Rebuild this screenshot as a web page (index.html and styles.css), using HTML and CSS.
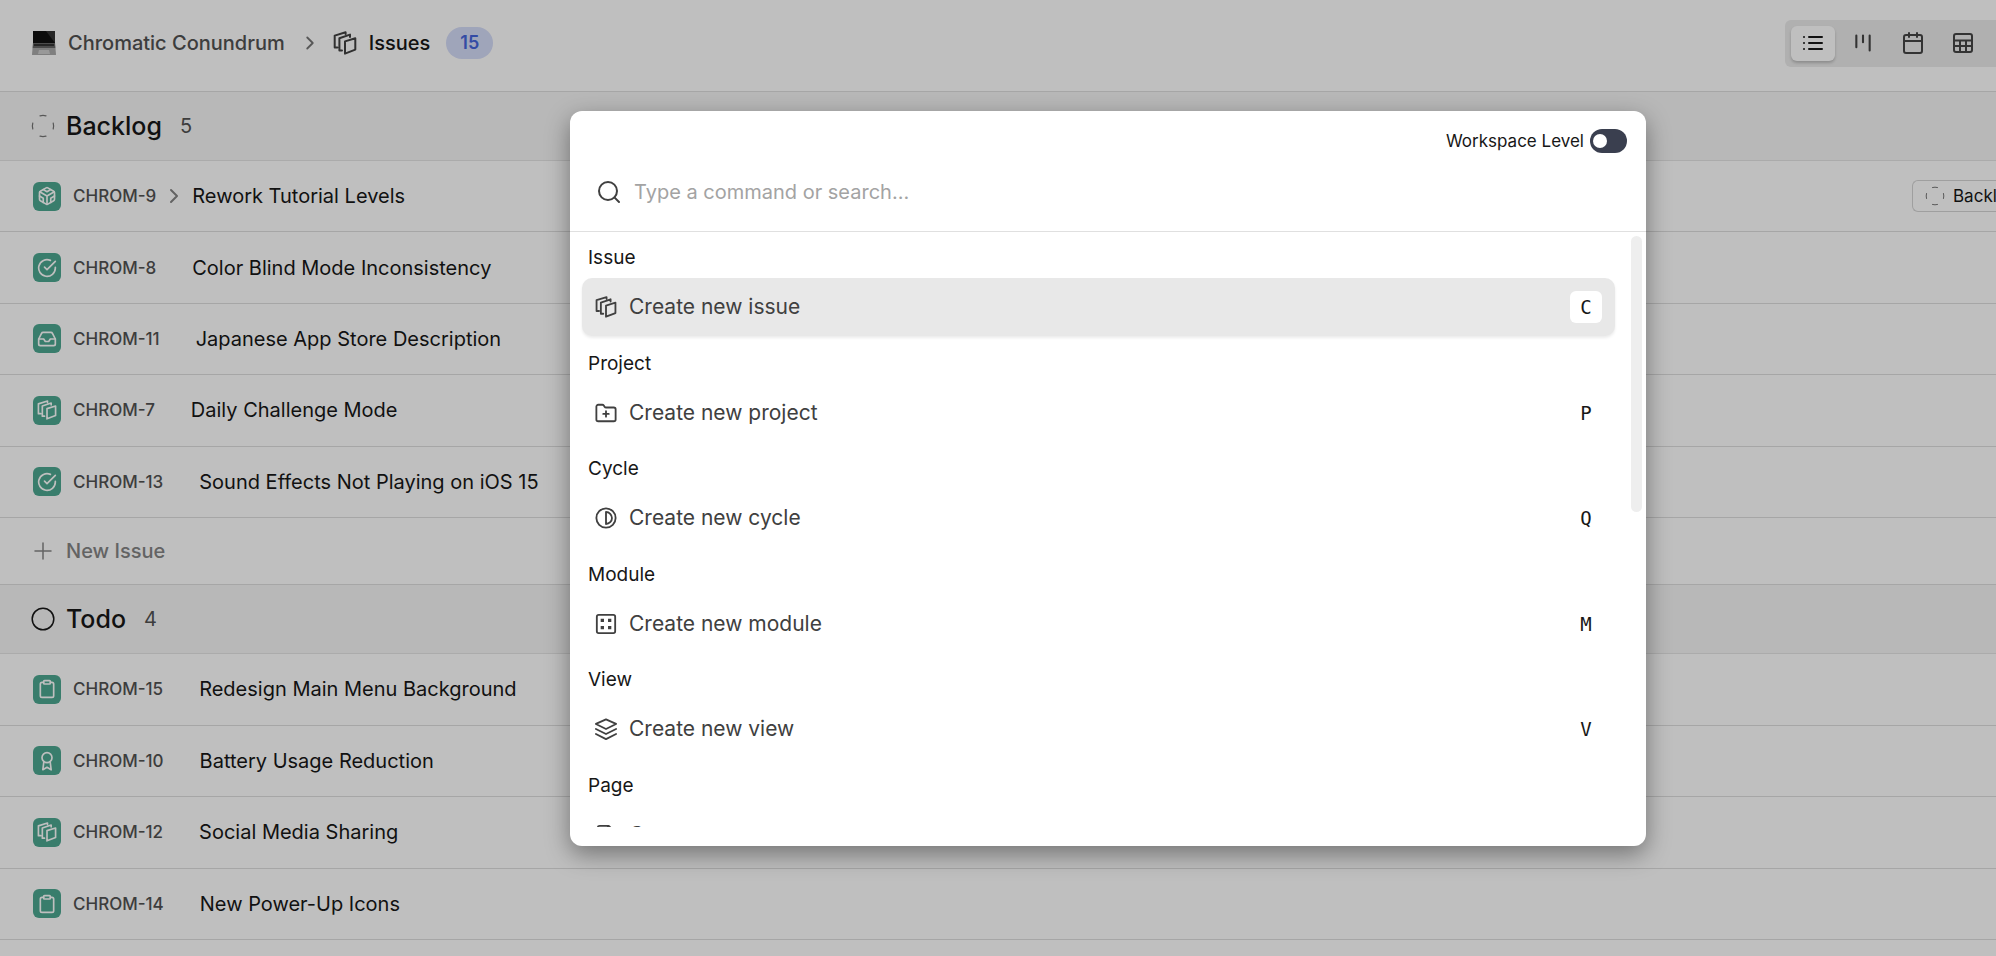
FILE: index.html
```html
<!DOCTYPE html>
<html lang="en">
<head>
<meta charset="utf-8">
<meta name="viewport" content="width=device-width, initial-scale=1">
<title>Chromatic Conundrum – Issues</title>
<link rel="stylesheet" href="styles.css">
</head>
<body>
<svg class="sprite" aria-hidden="true">
  <symbol id="i-issues" viewBox="0 0 24 24"><path d="M12 10.4 22.3 7.2V18.6L12 22.6ZM9 19.4H6.4V7.2L17 3.6V6M4.4 16.4H1.7V4.6L12.6 1.2V3"/></symbol>
  <symbol id="i-chevron" viewBox="0 0 24 24"><path d="m9 18 6-6-6-6"/></symbol>
  <symbol id="i-backlog" viewBox="0 0 24 24"><path d="M9 1.8a11 11 0 0 1 6 0M9 22.2a11 11 0 0 0 6 0M1.8 9a11 11 0 0 0 0 6M22.2 9a11 11 0 0 1 0 6"/></symbol>
  <symbol id="i-todo" viewBox="0 0 24 24"><circle cx="12" cy="12" r="10.800" stroke-width="1.500"/></symbol>
  <symbol id="i-box" viewBox="0 0 24 24"><path d="M21 16V8a2 2 0 0 0-1-1.73l-7-4a2 2 0 0 0-2 0l-7 4A2 2 0 0 0 3 8v8a2 2 0 0 0 1 1.73l7 4a2 2 0 0 0 2 0l7-4A2 2 0 0 0 21 16z"/><path d="M7.5 4.21 12 6.81l4.5-2.6M7.5 19.79V14.6L3 12M21 12l-4.5 2.6v5.19M3.27 6.96 12 12.01l8.73-5.05M12 22.08V12"/></symbol>
  <symbol id="i-check" viewBox="0 0 24 24"><path d="M22 11.08V12a10 10 0 1 1-5.93-9.14"/><path d="m9 11 3 3L22 4"/></symbol>
  <symbol id="i-inbox" viewBox="0 0 24 24"><path d="M22 12h-6l-2 3h-4l-2-3H2"/><path d="M5.45 5.11 2 12v6a2 2 0 0 0 2 2h16a2 2 0 0 0 2-2v-6l-3.45-6.89A2 2 0 0 0 16.76 4H7.24a2 2 0 0 0-1.79 1.11z"/></symbol>
  <symbol id="i-clipboard" viewBox="0 0 24 24"><rect x="8" y="2" width="8" height="4" rx="1"/><path d="M16 4h2a2 2 0 0 1 2 2v14a2 2 0 0 1-2 2H6a2 2 0 0 1-2-2V6a2 2 0 0 1 2-2h2"/></symbol>
  <symbol id="i-award" viewBox="0 0 24 24"><circle cx="12" cy="8" r="6"/><path d="M8.2 13 7 22.5l5-3 5 3-1.2-9.5"/></symbol>
  <symbol id="i-plus" viewBox="0 0 24 24"><path d="M4 12h16M12 4v16" stroke-width="1.500"/></symbol>
  <symbol id="i-list" viewBox="0 0 24 24"><path d="M8 6h13M8 12h13M8 18h13M3 6h.01M3 12h.01M3 18h.01"/></symbol>
  <symbol id="i-kanban" viewBox="0 0 24 24"><path d="M4 3v14M12 3v8M20 3v18" stroke-width="2.500"/></symbol>
  <symbol id="i-calendar" viewBox="0 0 24 24"><rect x="3" y="4" width="18" height="18" rx="2"/><path d="M16 2v4M8 2v4M3 10h18"/></symbol>
  <symbol id="i-sheet" viewBox="0 0 24 24"><rect x="3" y="3" width="18" height="18" rx="2"/><path d="M3 9.500h18M3 15h18M9 9.500V21M15 9.500V21"/></symbol>
  <symbol id="i-search" viewBox="0 0 24 24"><circle cx="11" cy="11" r="9"/><path d="m22 22-4.600-4.600"/></symbol>
  <symbol id="i-folder" viewBox="0 0 24 24"><path d="M12 10v6M9 13h6M20.500 21a2 2 0 0 0 2-2V8a2 2 0 0 0-2-2h-8.400a2 2 0 0 1-1.690-.9L9.600 3.900A2 2 0 0 0 7.930 3H3.500a2 2 0 0 0-2 2v14a2 2 0 0 0 2 2Z"/></symbol>
  <symbol id="i-cycle" viewBox="0 0 24 24"><circle cx="12" cy="12" r="10.500"/><path d="M12 18.500a6.500 6.500 0 0 0 0-13v13z"/></symbol>
  <symbol id="i-module" viewBox="0 0 24 24"><rect x="2" y="2" width="20" height="20" rx="2"/><path d="M8 6.200v3.600M16 6.200v3.600M8 14.200v3.600M16 14.200v3.600" stroke-width="3.600" stroke-linecap="butt"/></symbol>
  <symbol id="i-view" viewBox="0 0 24 24"><path d="m12 1.500 11 5-11 5.500L1 6.500zM1 17.500 12 23l11-5.500M1 12l11 5.500L23 12"/></symbol>
  <symbol id="i-page" viewBox="0 0 24 24"><path d="M15 2H5a2 2 0 0 0-2 2v16a2 2 0 0 0 2 2h13a2 2 0 0 0 2-2V7zM14 2v6h6"/></symbol>
</svg>

<main class="page">
  <header class="topbar">
    <nav class="crumbs" aria-label="Breadcrumb">
      <a class="crumb project" href="#">
        <svg class="laptop" viewBox="0 0 24 24" aria-hidden="true"><path fill="#111" d="M1 0h22v12H1z"/><path fill="#333" d="m14 0 9 12V0z"/><path fill="#666" d="M1 12h22l.5 5H.5z"/><path fill="#333" d="M2 13h20v2H2z"/><path fill="#aaa" d="M.5 17h23l.5 7H0z"/><path fill="#ccc" d="M7 19h10l1 4H6z"/></svg>
        Chromatic Conundrum
      </a>
      <svg class="icon crumb-sep" aria-hidden="true"><use href="#i-chevron"/></svg>
      <a class="crumb current" href="#"><svg class="icon icon-l" aria-hidden="true"><use href="#i-issues"/></svg>Issues</a>
      <span class="count">15</span>
    </nav>
    <div class="layouts" role="group" aria-label="Layout">
      <button class="layout active" aria-label="List"><svg class="icon icon-l"><use href="#i-list"/></svg></button>
      <button class="layout" aria-label="Board"><svg class="icon"><use href="#i-kanban"/></svg></button>
      <button class="layout" aria-label="Calendar"><svg class="icon icon-l"><use href="#i-calendar"/></svg></button>
      <button class="layout" aria-label="Spreadsheet"><svg class="icon icon-l"><use href="#i-sheet"/></svg></button>
    </div>
  </header>

  <section>
    <h2 class="state"><svg class="icon icon-l dim"><use href="#i-backlog"/></svg>Backlog <span class="total">5</span></h2>
    <ul class="rows five">
      <li class="row"><span class="badge"><svg class="icon"><use href="#i-box"/></svg></span><span class="key">CHROM-9</span><button class="expand" aria-label="Expand"><svg class="icon icon-l"><use href="#i-chevron"/></svg></button><a class="title" href="#">Rework Tutorial Levels</a><button class="chip"><svg class="icon dim"><use href="#i-backlog"/></svg>Backlog</button></li>
      <li class="row"><span class="badge"><svg class="icon"><use href="#i-check"/></svg></span><span class="key">CHROM-8</span><span class="expand"></span><a class="title" href="#">Color Blind Mode Inconsistency</a></li>
      <li class="row"><span class="badge"><svg class="icon"><use href="#i-inbox"/></svg></span><span class="key">CHROM-11</span><span class="expand"></span><a class="title" href="#">Japanese App Store Description</a></li>
      <li class="row"><span class="badge"><svg class="icon"><use href="#i-issues"/></svg></span><span class="key">CHROM-7</span><span class="expand"></span><a class="title" href="#">Daily Challenge Mode</a></li>
      <li class="row"><span class="badge"><svg class="icon"><use href="#i-check"/></svg></span><span class="key">CHROM-13</span><span class="expand"></span><a class="title" href="#">Sound Effects Not Playing on iOS 15</a></li>
    </ul>
    <button class="new-issue"><svg class="icon icon-l"><use href="#i-plus"/></svg>New Issue</button>
  </section>

  <section>
    <h2 class="state"><svg class="icon icon-l"><use href="#i-todo"/></svg>Todo <span class="total">4</span></h2>
    <ul class="rows four">
      <li class="row"><span class="badge"><svg class="icon"><use href="#i-clipboard"/></svg></span><span class="key">CHROM-15</span><span class="expand"></span><a class="title" href="#">Redesign Main Menu Background</a></li>
      <li class="row"><span class="badge"><svg class="icon"><use href="#i-award"/></svg></span><span class="key">CHROM-10</span><span class="expand"></span><a class="title" href="#">Battery Usage Reduction</a></li>
      <li class="row"><span class="badge"><svg class="icon"><use href="#i-issues"/></svg></span><span class="key">CHROM-12</span><span class="expand"></span><a class="title" href="#">Social Media Sharing</a></li>
      <li class="row"><span class="badge"><svg class="icon"><use href="#i-clipboard"/></svg></span><span class="key">CHROM-14</span><span class="expand"></span><a class="title" href="#">New Power-Up Icons</a></li>
    </ul>
  </section>
</main>

<div class="overlay">
  <div class="palette" role="dialog" aria-modal="true" aria-label="Command palette">
    <div class="level">
      <label for="level">Workspace Level</label>
      <input class="switch" id="level" type="checkbox" role="switch">
    </div>
    <div class="search">
      <svg class="icon icon-l" aria-hidden="true"><use href="#i-search"/></svg>
      <input class="query" type="text" placeholder="Type a command or search..." aria-label="Type a command or search">
    </div>
    <div class="results">
      <div class="groups">
        <section class="group"><h3 class="heading">Issue</h3><button class="command selected"><svg class="icon icon-m"><use href="#i-issues"/></svg>Create new issue<kbd class="shortcut">C</kbd></button></section>
        <section class="group"><h3 class="heading">Project</h3><button class="command"><svg class="icon icon-m"><use href="#i-folder"/></svg>Create new project<kbd class="shortcut">P</kbd></button></section>
        <section class="group"><h3 class="heading">Cycle</h3><button class="command"><svg class="icon icon-m"><use href="#i-cycle"/></svg>Create new cycle<kbd class="shortcut">Q</kbd></button></section>
        <section class="group"><h3 class="heading">Module</h3><button class="command"><svg class="icon icon-m"><use href="#i-module"/></svg>Create new module<kbd class="shortcut">M</kbd></button></section>
        <section class="group"><h3 class="heading">View</h3><button class="command"><svg class="icon icon-m"><use href="#i-view"/></svg>Create new view<kbd class="shortcut">V</kbd></button></section>
        <section class="group"><h3 class="heading">Page</h3><button class="command"><svg class="icon icon-m"><use href="#i-page"/></svg>Create new page</button></section>
      </div>
      <span class="thumb"></span>
    </div>
  </div>
</div>
</body>
</html>
```
FILE: styles.css
```css
* { box-sizing: border-box; }

body {
  margin: 0;
  height: 100vh;
  overflow: hidden;
  position: relative;
  background: #fff;
  color: #171717;
  font: 400 20px/28px Inter, "Liberation Sans", sans-serif;
}

h2, h3, ul { margin: 0; padding: 0; font: inherit; list-style: none; }
a { color: inherit; text-decoration: none; }
button, input { font: inherit; color: inherit; border: 0; margin: 0; padding: 0; background: none; }

.sprite { position: absolute; width: 0; height: 0; }

.icon {
  flex: none;
  width: 20px;
  height: 20px;
  fill: none;
  stroke: currentColor;
  stroke-width: 2;
  stroke-linecap: round;
  stroke-linejoin: round;
}
.icon-m { width: 22px; height: 22px; }
.icon-l { width: 24px; height: 24px; }
.dim { color: #757575; stroke-width: 1.2; }

/* Top bar */
.topbar {
  display: flex;
  justify-content: space-between;
  align-items: center;
  height: 92px;
  padding: 0 0 5px 32px;
  border-bottom: 1px solid #dedede;
}
.crumbs, .crumb { display: flex; align-items: center; }
.crumb { gap: 12px; font-weight: 500; }
.project { color: #525252; }
.current .icon { color: #404040; }
.laptop { width: 24px; height: 24px; }
.crumb-sep { margin: 0 12px 0 14px; width: 22px; height: 22px; color: #757575; }
.count {
  margin-left: 16px;
  padding: 0 14px;
  border-radius: 16px;
  background: #d5dcf8;
  color: #4565dc;
  font-size: 18px;
  font-weight: 600;
  line-height: 32px;
}
.layouts {
  display: flex;
  gap: 6px;
  padding: 6px 11px 6px 6px;
  border-radius: 6px 0 0 6px;
  background: #ebebeb;
}
.layout {
  display: flex;
  align-items: center;
  justify-content: center;
  width: 44px;
  height: 35px;
  border-radius: 6px;
  color: #444;
}
.active { background: #fff; color: #171717; box-shadow: 0 2px 3px rgba(0, 0, 0, .2); }

/* Issue list */
.state {
  display: flex;
  align-items: center;
  gap: 11px;
  height: 69px;
  padding: 0 31px;
  border-bottom: 1px solid #e4e4e4;
  background: #f6f6f6;
  font-size: 25px;
  font-weight: 500;
}
.total { margin-left: 7px; color: #525252; font-size: 20px; font-weight: 400; }
.rows { display: grid; grid-auto-rows: 1fr; }
.five { min-height: 357px; }
.four { min-height: 286px; }
.row { display: flex; align-items: center; padding-left: 33px; border-bottom: 1px solid #dedede; }
.badge {
  display: flex;
  align-items: center;
  justify-content: center;
  width: 28px;
  height: 29px;
  margin-right: 12px;
  border-radius: 6px;
  background: #4da790;
  color: #fff;
}
.key { color: #525252; font-size: 17px; font-weight: 500; }
.expand { display: flex; align-items: center; justify-content: center; width: 36px; color: #858585; }
.chip {
  display: flex;
  align-items: center;
  gap: 8px;
  width: 84px;
  height: 32px;
  margin-left: auto;
  padding-left: 12px;
  overflow: hidden;
  border: 1px solid #d4d4d4;
  border-right: 0;
  border-radius: 6px 0 0 6px;
  font-size: 17px;
}
.new-issue {
  display: flex;
  align-items: center;
  gap: 11px;
  width: 100%;
  height: 67px;
  padding: 0 31px;
  border-bottom: 1px solid #dedede;
  color: #858585;
  font-weight: 500;
}

/* Command palette */
.overlay {
  position: absolute;
  inset: 0;
  display: flex;
  padding: 111px 350px 110px 570px;
  background: rgba(0, 0, 0, .25);
}
.palette {
  flex: 1;
  min-width: 0;
  display: flex;
  flex-direction: column;
  padding-bottom: 19px;
  border-radius: 12px;
  background: #fff;
  box-shadow: 0 8px 24px rgba(0, 0, 0, .4);
}
.level {
  display: flex;
  align-items: center;
  justify-content: flex-end;
  gap: 6px;
  padding: 16px 19px 0;
  font-size: 17px;
}
.switch {
  appearance: none;
  display: flex;
  align-items: center;
  width: 37px;
  height: 24px;
  padding: 0 3px;
  border-radius: 12px;
  background: #3a3f4f;
}
.switch::before { content: ""; width: 14px; height: 14px; border-radius: 7px; background: #fff; }
.switch:checked { justify-content: flex-end; }
.search {
  display: flex;
  align-items: center;
  gap: 13px;
  height: 77px;
  padding: 0 27px 2px;
  border-bottom: 1px solid #e0e0e0;
  color: #404040;
}
.query { flex: 1; min-width: 0; outline: 0; }
.query::placeholder { color: #a3a3a3; opacity: 1; }
.results { position: relative; flex: 1; min-height: 0; overflow: hidden; padding: 0 31px 0 12px; }
.groups { display: grid; grid-auto-rows: 1fr; min-height: 633px; }
.heading { padding: 12px 6px 6px; font-size: 19px; }
.command {
  display: flex;
  align-items: center;
  gap: 12px;
  width: 100%;
  height: 58px;
  padding: 0 13px;
  border-radius: 10px;
  color: #404040;
  font-size: 21px;
  text-align: left;
}
.selected { background: #e8e8e8; box-shadow: 0 2px 3px rgba(0, 0, 0, .08); }
.shortcut {
  width: 32px;
  margin-left: auto;
  border-radius: 6px;
  background: #fff;
  color: #171717;
  font: 19px/32px "DejaVu Sans Mono", monospace;
  text-align: center;
}
.thumb {
  position: absolute;
  top: 4px;
  right: 4px;
  width: 11px;
  height: 276px;
  border-radius: 6px;
  background: #eee;
}
```
